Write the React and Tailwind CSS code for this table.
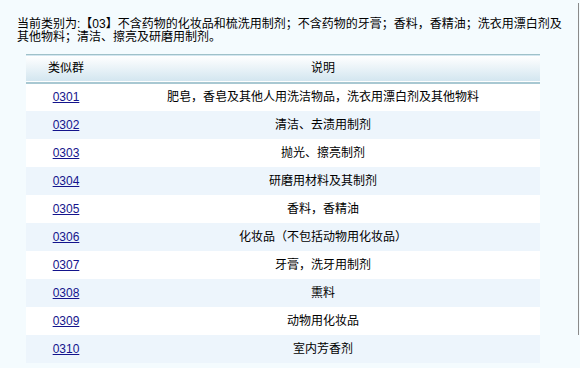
import React from "react";

const rows = [
  ["0301", "肥皂，香皂及其他人用洗洁物品，洗衣用漂白剂及其他物料"],
  ["0302", "清洁、去渍用制剂"],
  ["0303", "抛光、擦亮制剂"],
  ["0304", "研磨用材料及其制剂"],
  ["0305", "香料，香精油"],
  ["0306", "化妆品（不包括动物用化妆品）"],
  ["0307", "牙膏，洗牙用制剂"],
  ["0308", "熏料"],
  ["0309", "动物用化妆品"],
  ["0310", "室内芳香剂"],
];

export default function App() {
  return (
    <div className="relative w-[580px] h-[368px] overflow-hidden bg-[#f4fbfe] text-[12px] text-black font-['Liberation_Sans','Noto_Sans_CJK_SC',sans-serif]">
      <p className="pl-[17px] pt-[18px] w-[566px] leading-[13px]">
        当前类别为:【03】不含药物的化妆品和梳洗用制剂；不含药物的牙膏；香料，香精油；洗衣用漂白剂及其他物料；清洁、擦亮及研磨用制剂。
      </p>

      <table className="ml-[26px] mt-[10px] w-[514px] border-collapse">
        <thead>
          <tr className="h-[28px] border-t border-b-2 border-t-[#9fc1c9] border-b-[#a8c8d2] bg-gradient-to-b from-white to-[#d3e6f0]">
            <th className="w-[80px] font-normal text-center">类似群</th>
            <th className="font-normal text-center">说明</th>
          </tr>
        </thead>
        <tbody>
          {rows.map(([code, desc], i) => (
            <tr key={code} className={`h-[28px] ${i % 2 ? "bg-[#edf5fc]" : "bg-white"}`}>
              <td className="text-center">
                <a href="#" className="text-[#14148c] underline">{code}</a>
              </td>
              <td className="text-center">{desc}</td>
            </tr>
          ))}
        </tbody>
      </table>

      <div className="absolute right-[1px] top-[3px] w-px h-[332px] bg-[#8a8a8a]" />
    </div>
  );
}
